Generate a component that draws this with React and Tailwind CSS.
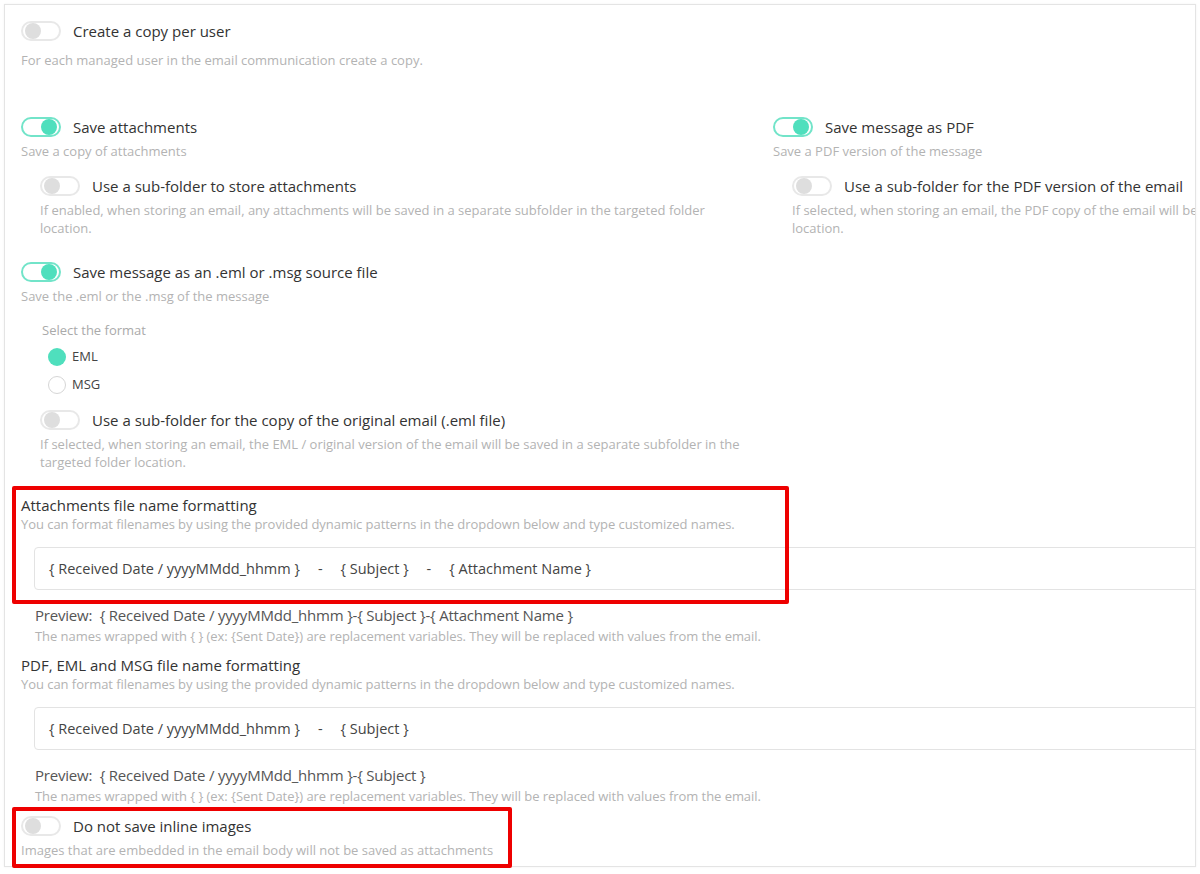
import React from "react";

const font = { fontFamily: '"Open Sans", "Liberation Sans", sans-serif' };

const Toggle = ({ on }) => (
  <span
    className={
      "relative inline-flex items-center w-[40px] h-[20px] rounded-full border-2 shrink-0 " +
      (on ? "border-[#72e4c9] justify-end pr-[2px]" : "border-[#e8e8e8] justify-start pl-[2px]")
    }
  >
    <span
      className={
        "block w-[16px] h-[16px] rounded-full " + (on ? "bg-[#4fdfbd]" : "bg-[#dedede]")
      }
    />
  </span>
);

const Option = ({ on, label, desc, sub, descGap = "mt-[5px]" }) => (
  <div className={sub ? "pl-[19px]" : ""}>
    <div className="flex items-center gap-[12px] h-[20px]">
      <Toggle on={on} />
      <span className="text-[15px] text-[#333]">{label}</span>
    </div>
    <p className={descGap + " text-[13px] leading-[18px] text-[#b3b3b3]"}>{desc}</p>
  </div>
);

const Radio = ({ on, label }) => (
  <div className="flex items-center gap-[6px] h-[20px]">
    <span
      className={
        "w-[18px] h-[18px] rounded-full " +
        (on ? "bg-[#4fdfbd]" : "border border-[#d6d6d6] bg-white")
      }
    />
    <span className="text-[13px] text-[#444]">{label}</span>
  </div>
);

const PatternBox = ({ items }) => (
  <div className="ml-[13px] h-[43px] border border-[#e3e3e3] rounded-[4px] flex items-center px-[14px] text-[14.5px] text-[#444]">
    {items.map((t, i) => (
      <React.Fragment key={i}>
        {i > 0 && <span className="mx-[18px]">-</span>}
        <span>{t}</span>
      </React.Fragment>
    ))}
  </div>
);

const Formatting = ({ title, items, preview }) => (
  <div>
    <div className="text-[15px] text-[#333] leading-[20px]">{title}</div>
    <p className="text-[13px] leading-[18px] text-[#b3b3b3] tracking-[-0.05px]">
      You can format filenames by using the provided dynamic patterns in the dropdown below and type customized names.
    </p>
    <div className="mt-[14px]">
      <PatternBox items={items} />
    </div>
    <div className="ml-[14px] mt-[15px] text-[15px] text-[#555] leading-[20px] tracking-[-0.2px]">
      Preview:&nbsp; {preview}
    </div>
    <p className="ml-[14px] mt-[2px] text-[13px] leading-[18px] text-[#b3b3b3] tracking-[-0.05px]">
      The names wrapped with {"{ }"} (ex: {"{Sent Date}"}) are replacement variables. They will be replaced with values from the email.
    </p>
  </div>
);

export default function App() {
  return (
    <div className="w-[1200px] h-[874px] bg-white relative" style={font}>
      <div className="absolute left-[4px] top-[4px] w-[1192px] h-[863px] border border-[#e4e4e4] overflow-hidden shadow-[0_0_2px_rgba(0,0,0,0.06)]">
        <div className="w-[1530px] pl-[16px] pt-[16px]">
          <Option
            descGap="mt-[10px]"
            label="Create a copy per user"
            desc="For each managed user in the email communication create a copy."
          />

          <div className="flex mt-[48px]">
            <div className="w-[752px] pr-[25px] flex flex-col">
              <Option on label="Save attachments" desc="Save a copy of attachments" />
              <div className="mt-[16px]">
                <Option
                  sub
                  label="Use a sub-folder to store attachments"
                  desc="If enabled, when storing an email, any attachments will be saved in a separate subfolder in the targeted folder location."
                />
              </div>
              <div className="mt-[25px]">
                <Option on label="Save message as an .eml or .msg source file" desc="Save the .eml or the .msg of the message" />
              </div>
              <div className="pl-[21px] mt-[16px]">
                <div className="text-[13px] text-[#aaa] leading-[18px]">Select the format</div>
                <div className="mt-[8px] pl-[6px] flex flex-col gap-[8px]">
                  <Radio on label="EML" />
                  <Radio label="MSG" />
                </div>
              </div>
              <div className="mt-[15px]">
                <Option
                  sub
                  label="Use a sub-folder for the copy of the original email (.eml file)"
                  desc="If selected, when storing an email, the EML / original version of the email will be saved in a separate subfolder in the targeted folder location."
                />
              </div>
            </div>
            <div className="w-[752px] flex flex-col">
              <Option on label="Save message as PDF" desc="Save a PDF version of the message" />
              <div className="mt-[16px]">
                <Option
                  sub
                  label="Use a sub-folder for the PDF version of the email"
                  desc="If selected, when storing an email, the PDF copy of the email will be saved in a separate subfolder in the targeted folder location."
                />
              </div>
            </div>
          </div>

          <div className="mt-[24px]">
            <Formatting
              title="Attachments file name formatting"
              items={["{ Received Date / yyyyMMdd_hhmm }", "{ Subject }", "{ Attachment Name }"]}
              preview="{ Received Date / yyyyMMdd_hhmm }-{ Subject }-{ Attachment Name }"
            />
          </div>
          <div className="mt-[10px]">
            <Formatting
              title="PDF, EML and MSG file name formatting"
              items={["{ Received Date / yyyyMMdd_hhmm }", "{ Subject }"]}
              preview="{ Received Date / yyyyMMdd_hhmm }-{ Subject }"
            />
          </div>
          <div className="mt-[11px]">
            <Option label="Do not save inline images" desc="Images that are embedded in the email body will not be saved as attachments" />
          </div>
        </div>
      </div>

      {/* annotation boxes */}
      <div className="absolute left-[12px] top-[486px] w-[777px] h-[118px] border-[4px] border-[#ee0000] rounded-[2px]" />
      <div className="absolute left-[12px] top-[807px] w-[500px] h-[61px] border-[4px] border-[#ee0000] rounded-[2px]" />
    </div>
  );
}
